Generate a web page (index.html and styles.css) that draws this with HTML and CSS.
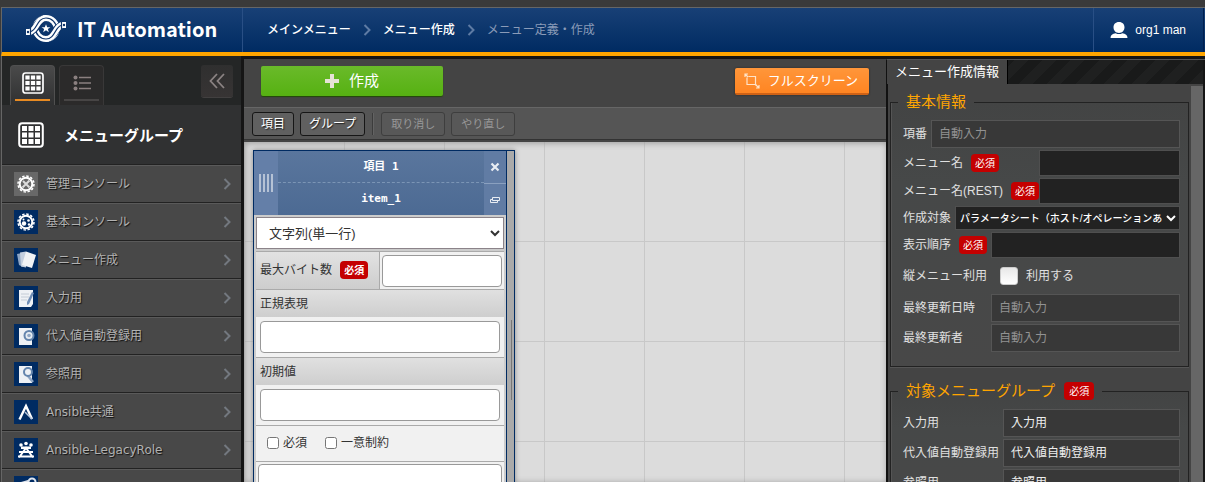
FILE: index.html
```html
<!DOCTYPE html>
<html lang="ja">
<head>
<meta charset="utf-8">
<title>IT Automation</title>
<link rel="stylesheet" href="styles.css">
</head>
<body>
<div class="app">
  <header class="header">
    <a class="brand" href="#">
      <svg class="brand-mark" viewBox="0 0 42 29" fill="none">
        <circle cx="21" cy="14.500" r="10.500" stroke="#fff" stroke-width="6"/>
        <circle cx="21" cy="14.500" r="10.500" stroke="#0d3267" stroke-width="1.200"/>
        <g stroke="#0d3267" stroke-width="8">
          <path d="M6 17C12 15 13 7 19 4.500"/>
          <path d="M36 12C30 14 29 22 23 24.500"/>
        </g>
        <g stroke="#fff" stroke-width="6">
          <path d="M1 18H5C12 16 12 4 21 4"/>
          <path d="M41 11H37C30 13 30 25 21 25"/>
        </g>
        <g stroke="#0d3267" stroke-width="1.200">
          <path d="M6 17.500C12 16 12 4 21 4"/>
          <path d="M36 11.500C30 13 30 25 21 25"/>
          <path d="M5.500 14v7M36.500 8v7"/>
        </g>
        <g fill="#0d3267"><circle cx="3" cy="18" r="1.200"/><circle cx="39" cy="11" r="1.200"/></g>
        <path fill="#fff" d="M21 10.300l1.200 2.900h3.200l-2.500 1.900.9 3.100-2.800-1.900-2.800 1.900.9-3.100-2.500-1.900h3.200z"/>
      </svg>
      <span>IT Automation</span>
    </a>
    <nav class="crumbs">
      <a href="#">メインメニュー</a>
      <svg class="chev" viewBox="0 0 8 12"><path d="M1.500 1l5 5-5 5"/></svg>
      <a href="#">メニュー作成</a>
      <svg class="chev" viewBox="0 0 8 12"><path d="M1.500 1l5 5-5 5"/></svg>
      <span>メニュー定義・作成</span>
    </nav>
    <button class="user" type="button">
      <svg viewBox="0 0 18 18"><path fill="#fff" d="M9 1c3.600 0 5.500 2.300 5.500 5.300S12.500 12 9 12 3.500 9.300 3.500 6.300 5.400 1 9 1zM.5 17c0-3 2-4.200 5.200-4.800 2 1.200 4.600 1.200 6.600 0 3.200.6 5.200 1.800 5.200 4.800z"/></svg>
      org1 man
    </button>
  </header>

  <div class="body">
    <aside class="side">
      <div class="side-tabs">
        <button class="side-tab active" type="button" aria-label="メニューグループ"><svg class="ico-grid" viewBox="0 0 26 26"><use href="#grid"/></svg></button>
        <button class="side-tab" type="button" aria-label="リスト"><svg class="ico-list" viewBox="0 0 18 16"><g fill="#8b8080"><circle cx="2.500" cy="2.500" r="2"/><circle cx="2.500" cy="8" r="2"/><circle cx="2.500" cy="13.500" r="2"/></g><path stroke="#8b8080" stroke-width="1.500" d="M6 2.500h12M6 8h12M6 13.500h12"/></svg></button>
        <button class="side-fold" type="button" aria-label="閉じる"><svg viewBox="0 0 16 16" fill="none" stroke="#8b8383" stroke-width="1.800"><path d="M8 1L1.500 8 8 15M15 1L8.500 8l6.500 7"/></svg></button>
      </div>
      <h2 class="side-title"><svg viewBox="0 0 26 26"><g id="grid"><rect x="1.200" y="1.200" width="23.600" height="23.600" rx="3" fill="none" stroke="#fff" stroke-width="2"/><path fill="#fff" d="M4 4h5v5H4zM10.500 4h5v5h-5zM17 4h5v5h-5zM4 10.500h5v5H4zM10.500 10.500h5v5h-5zM17 10.500h5v5h-5zM4 17h5v5H4zM10.500 17h5v5h-5zM17 17h5v5h-5z"/></g></svg>メニューグループ</h2>
      <ul class="side-list">
        <li><a href="#"><svg class="tile gray" viewBox="0 0 24 24"><circle cx="12" cy="12" r="8" class="teeth"/><circle cx="12" cy="12" r="6.300" class="ring"/><path class="ln2" d="M9 9l6.500 6.500M15.500 8.500l-7 7"/></svg><span>管理コンソール</span><svg class="chev" viewBox="0 0 8 12"><path d="M1.500 1l5 5-5 5"/></svg></a></li>
        <li><a href="#"><svg class="tile" viewBox="0 0 24 24"><circle cx="12" cy="12" r="8" class="teeth"/><circle cx="12" cy="12" r="6.300" class="ring"/><g fill="#fff"><circle cx="10" cy="13.500" r="2.200"/><circle cx="14.500" cy="10.500" r="1.300"/><circle cx="15" cy="14.500" r="1.200"/><circle cx="9.500" cy="9.500" r="1"/></g></svg><span>基本コンソール</span><svg class="chev" viewBox="0 0 8 12"><path d="M1.500 1l5 5-5 5"/></svg></a></li>
        <li><a href="#"><svg class="tile" viewBox="0 0 24 24"><path fill="#8fa6c4" d="M3 6l5-1 1 14-4-2z"/><path fill="#c5d0df" d="M6 4.500l6-1v16l-5-1z"/><path fill="#f1f3f5" d="M12 3.500l10 3.500-4 13-10-3z"/></svg><span>メニュー作成</span><svg class="chev" viewBox="0 0 8 12"><path d="M1.500 1l5 5-5 5"/></svg></a></li>
        <li><a href="#"><svg class="tile" viewBox="0 0 24 24"><path class="book" d="M5 4h14v14l-2 3H5z"/><path class="rule" d="M7 8h8M7 11h8M7 14h6"/><path fill="#6f8db5" d="M20 7l-5 11-2 1 0-3 5-10z"/></svg><span>入力用</span><svg class="chev" viewBox="0 0 8 12"><path d="M1.500 1l5 5-5 5"/></svg></a></li>
        <li><a href="#"><svg class="tile" viewBox="0 0 24 24"><path class="book" d="M5 4h13v17H5z"/><circle cx="15" cy="11.500" r="4.500" fill="#e6ecf2" stroke="#6485ad" stroke-width="2"/><circle cx="15" cy="11.500" r="1.800" fill="#8fa6c4"/></svg><span>代入値自動登録用</span><svg class="chev" viewBox="0 0 8 12"><path d="M1.500 1l5 5-5 5"/></svg></a></li>
        <li><a href="#"><svg class="tile" viewBox="0 0 24 24"><path class="book" d="M5 4h13v17H5z"/><path stroke="#8fa6c4" stroke-width="2.500" d="M14 14l5 6"/><circle cx="14" cy="10" r="4" fill="#eef1f5" stroke="#6485ad" stroke-width="2"/></svg><span>参照用</span><svg class="chev" viewBox="0 0 8 12"><path d="M1.500 1l5 5-5 5"/></svg></a></li>
        <li><a href="#"><svg class="tile" viewBox="0 0 24 24"><path fill="none" stroke="#fff" stroke-width="2.400" d="M5.500 19.500L12 6l6 13"/><path stroke="#b8c5d8" stroke-width="1.500" d="M11 12l7 7"/></svg><span>Ansible共通</span><svg class="chev" viewBox="0 0 8 12"><path d="M1.500 1l5 5-5 5"/></svg></a></li>
        <li><a href="#"><svg class="tile" viewBox="0 0 24 24"><g fill="#fff"><circle cx="7" cy="7" r="1.800"/><circle cx="12" cy="5.500" r="1.800"/><circle cx="17" cy="7" r="1.800"/><path d="M7 8.500h10V11H7z"/></g><path fill="none" stroke="#fff" stroke-width="2" d="M5 19.500L12 10l7 9.500M5 14h14M4 18.500h16"/></svg><span>Ansible-LegacyRole</span><svg class="chev" viewBox="0 0 8 12"><path d="M1.500 1l5 5-5 5"/></svg></a></li>
        <li><a href="#" aria-label="Ansible"><svg class="tile" viewBox="0 0 24 24"><circle cx="18" cy="6" r="3.500" fill="none" stroke="#dfe5ed" stroke-width="2"/><path fill="#dfe5ed" d="M7 6l7-2 2 8-10 8z"/></svg></a></li>
      </ul>
    </aside>

    <main class="main">
      <div class="actions">
        <button class="btn-create" type="button"><svg viewBox="0 0 14 14"><path fill="#e6e3d6" d="M5 0h4v5h5v4H9v5H5V9H0V5h5z"/></svg>作成</button>
        <button class="btn-full" type="button"><svg viewBox="0 0 16 16" fill="none" stroke="#ffe3c8" stroke-width="1.200"><path d="M4.500 3.500h7v9M3 4.500v7h9.500M1 4V1h3M1 1l3 3M15 12v3h-3M12 12l3 3"/></svg>フルスクリーン</button>
      </div>
      <div class="tools">
        <button type="button">項目</button>
        <button type="button">グループ</button>
        <i class="sep"></i>
        <button type="button" disabled>取り消し</button>
        <button type="button" disabled>やり直し</button>
      </div>
      <div class="canvas">
        <section class="item">
          <div class="item-main">
            <div class="item-head">
              <div class="grip"><i></i><i></i><i></i><i></i></div>
              <div class="names"><div>項目 1</div><div>item_1</div></div>
              <div class="ops">
                <button type="button" aria-label="削除"><svg viewBox="0 0 10 10"><path stroke="#e9edf3" stroke-width="2.200" d="M1.500 1.500l7 7M8.500 1.500l-7 7"/></svg></button>
                <button type="button" aria-label="複製"><svg viewBox="0 0 10 10" fill="none" stroke="#e9edf3"><path d="M2.500 2.500h7v3h-7zM2 4.500H.5v3h7V6"/></svg></button>
              </div>
            </div>
            <div class="item-body">
              <select class="type" aria-label="型"><option>文字列(単一行)</option></select>
              <div class="pair">
                <label for="maxb">最大バイト数 <b class="req">必須</b></label>
                <div class="cell"><input id="maxb" type="text"></div>
              </div>
              <div class="block"><label for="regex">正規表現</label><div class="field"><input id="regex" type="text"></div></div>
              <div class="block"><label for="init">初期値</label><div class="field"><input id="init" type="text"></div></div>
              <div class="checks">
                <label><input type="checkbox">必須</label>
                <label><input type="checkbox">一意制約</label>
              </div>
              <div class="note"><textarea aria-label="説明"></textarea></div>
            </div>
          </div>
          <div class="resize"></div>
        </section>
      </div>
    </main>

    <aside class="panel">
      <div class="panel-tabs"><button type="button">メニュー作成情報</button></div>
      <div class="panel-body">
        <form class="panel-form">
          <fieldset>
            <legend>基本情報</legend>
            <div class="row"><span class="lab">項番</span><span class="auto">自動入力</span></div>
            <div class="row l132"><label class="lab" for="mname">メニュー名 <b class="req">必須</b></label><input id="mname" type="text"></div>
            <div class="row l132"><label class="lab" for="mrest">メニュー名(REST) <b class="req">必須</b></label><input id="mrest" type="text"></div>
            <div class="row"><label class="lab" for="target">作成対象</label><select id="target"><option>パラメータシート（ホスト/オペレーションあり）</option></select></div>
            <div class="row l84"><label class="lab" for="order">表示順序 <b class="req">必須</b></label><input id="order" type="text"></div>
            <div class="row tall l84"><span class="lab">縦メニュー利用</span><label class="use"><input type="checkbox">利用する</label></div>
            <div class="row l84"><span class="lab">最終更新日時</span><span class="auto">自動入力</span></div>
            <div class="row l84"><span class="lab">最終更新者</span><span class="auto">自動入力</span></div>
          </fieldset>
          <fieldset>
            <legend>対象メニューグループ <b class="req">必須</b></legend>
            <div class="row l96"><span class="lab">入力用</span><span class="auto set">入力用</span></div>
            <div class="row l96"><span class="lab">代入値自動登録用</span><span class="auto set">代入値自動登録用</span></div>
            <div class="row l96"><span class="lab">参照用</span><span class="auto set">参照用</span></div>
          </fieldset>
        </form>
        <div class="bar"></div>
      </div>
    </aside>
  </div>
</div>
</body>
</html>
```

FILE: styles.css
```css
* { box-sizing: border-box; }
body {
  margin: 0;
  background: #3a3a3a;
  color: #fff;
  font: 12px/18px "Liberation Sans", "Noto Sans CJK JP", sans-serif;
  overflow: hidden;
}
button, input, select, textarea { font: inherit; color: inherit; margin: 0; padding: 0; border: 0; }
button { background: none; }
a { color: inherit; text-decoration: none; }

.app { display: flex; flex-direction: column; height: 100vh; padding-top: 7px; border-left: 1px solid #3a3a3a; }
.header {
  display: flex;
  flex: none;
  height: 49px;
  border-top: 1px solid #666;
  border-left: 1px solid #666;
  border-bottom: 4px solid #ffa500;
  background: linear-gradient(#184076, #002b62);
}
.brand {
  display: flex;
  align-items: center;
  gap: 10px;
  width: 241px;
  padding: 0 0 3px 23px;
  border-right: 1px solid #294f85;
  font: bold 20px/30px "Noto Sans CJK JP", sans-serif;
  white-space: nowrap;
}
.brand-mark { flex: none; width: 42px; height: 29px; }
.crumbs { display: flex; flex: 1; align-items: center; gap: 12px; padding-left: 24px; font-weight: 500; }
.crumbs span { color: #8a9bb8; font-weight: 400; }
.chev { flex: none; width: 8px; height: 12px; fill: none; stroke: #73787f; stroke-width: 2; }
.crumbs .chev { stroke: #5e7ba4; }
.user {
  display: flex;
  align-items: center;
  gap: 7px;
  margin-right: 1px;
  padding: 0 17px 0 16px;
  border-left: 1px solid #294f85;
  border-right: 1px solid #002050;
}
.user svg { width: 18px; height: 18px; }

.body { display: flex; flex: 1; min-height: 0; background: #151515; border-left: 1px solid #666; }

.side { flex: none; width: 239px; background: #484848; overflow: hidden; }
.side-tabs { display: flex; align-items: flex-start; gap: 4px; height: 49px; padding: 9px 8px 0; background: #242626; }
.side-tab {
  display: grid;
  place-items: center;
  position: relative;
  width: 45px;
  height: 40px;
  padding-bottom: 5px;
  border: 1px solid #393838;
  border-bottom: 0;
  border-radius: 4px 4px 0 0;
  background: #2b2a2a;
}
.side-tab::after { content: ""; position: absolute; left: 4px; right: 4px; bottom: 4px; height: 2px; background: #474545; }
.side-tab.active { background: linear-gradient(#4a4a4a, #2f3031); border-color: #505050; }
.side-tab.active::after { background: #e88b22; }
.ico-grid { width: 22px; height: 22px; }
.ico-list { width: 18px; height: 16px; }
.side-fold { display: grid; place-items: center; width: 32px; height: 32px; margin-left: auto; border-radius: 3px; background: linear-gradient(#2f2f2f, #373434); box-shadow: 0 1px #424040; }
.side-fold svg { width: 16px; height: 16px; }
.side-title {
  display: flex;
  align-items: center;
  gap: 20px;
  height: 59px;
  margin: 0;
  padding-left: 16px;
  background: #303132;
  font: bold 15px/22px "Noto Sans CJK JP", sans-serif;
}
.side-title svg { width: 26px; height: 26px; }
.side-list { margin: 0; padding: 0; list-style: none; font-family: "DejaVu Sans", "Noto Sans CJK JP", sans-serif; }
.side-list a {
  display: flex;
  align-items: center;
  gap: 8px;
  height: 38px;
  padding: 1px 10px 0 12px;
  border-top: 1px solid #222;
  box-shadow: inset 0 1px #5a5a5a;
  color: #b2b2b2;
  text-shadow: 1px 1px 1px #111;
  white-space: nowrap;
}
.side-list span { flex: 1; }
.tile { flex: none; width: 24px; height: 24px; background: #002b62; }
.tile.gray { background: #686868; }
.teeth { fill: none; stroke: #fff; stroke-width: 1.500; stroke-dasharray: 2.500 1.690; }
.ring { fill: none; stroke: #fff; stroke-width: 2; }
.ln2 { stroke: #ddd; stroke-width: 2; }
.book { fill: #eef1f5; }
.rule { stroke: #c4ccd6; }

.main { display: flex; flex: 1; flex-direction: column; min-width: 0; margin: 3px 0 0 3px; background: #444; }
.actions { display: flex; flex: none; justify-content: space-between; align-items: flex-start; height: 48px; padding: 7px 17px 0; }
.btn-create, .btn-full { display: flex; align-items: center; justify-content: center; border-radius: 2px; }
.btn-create { gap: 10px; width: 182px; height: 30px; background: linear-gradient(#6aba2a, #56b112); box-shadow: 0 1px 1px #234a08; font-size: 15px; }
.btn-create svg { width: 14px; height: 14px; }
.btn-full { gap: 8px; height: 27px; margin-top: 2px; padding: 0 11px 0 9px; border-bottom: 2px solid #cf6216; background: linear-gradient(#ff963a, #ff8522); box-shadow: 0 0 2px #222; font-size: 13px; }
.btn-full svg { width: 16px; height: 16px; }
.tools {
  display: flex;
  flex: none;
  align-items: center;
  gap: 6px;
  height: 33px;
  padding: 0 8px;
  border-top: 1px solid #666;
  border-bottom: 1px solid #333;
  background: #555;
}
.tools button { height: 24px; padding: 0 8px; border: 1px solid #161616; border-radius: 3px; background: #606060; text-shadow: 1px 1px 1px #222; }
.tools button:disabled { padding: 0 9px; border-color: #3e3e3e; background: #585858; color: #989898; font-size: 11px; text-shadow: none; }
.sep { width: 2px; height: 22px; margin: 0 1px; border-left: 1px solid #3c3c3c; border-right: 1px solid #636363; }
.canvas {
  flex: 1;
  min-height: 0;
  overflow: hidden;
  margin-top: 2px;
  padding: 8px 9px;
  background:
    linear-gradient(90deg, #c8c8c8 1px, transparent 1px) 0 0 / 100px 100px,
    linear-gradient(#c8c8c8 1px, transparent 1px) 0 -1px / 100px 100px,
    #dcdcdc;
  box-shadow: inset 1px 1px 6px #999;
}

.item { display: flex; width: 262px; border: 1px solid #002b62; box-shadow: 0 0 5px #8a8a8a; background: #ccc; color: #333; }
.item-main { flex: 1; }
.resize { width: 8px; border-left: 1px solid #002b62; background: linear-gradient(#777, #777) 4px 169px / 1px 80px no-repeat #aaa; }
.item-head { display: flex; height: 64px; background: linear-gradient(#5a769d, #4c6a93); color: #fff; }
.grip { display: flex; align-items: center; justify-content: center; gap: 2px; width: 24px; background: #647fa8; }
.grip i { width: 2px; height: 18px; background: #b5c2d5; }
.names { flex: 1; text-align: center; font: bold 11px/31px "DejaVu Sans Mono", "Noto Sans CJK JP", monospace; }
.names div + div { border-top: 1px dashed #7b95b5; }
.ops { display: grid; grid-template-rows: 1fr 1fr; width: 22px; background: #617ca4; }
.ops button { display: grid; place-items: center; }
.ops button + button { border-top: 1px solid #8aa0bf; }
.ops svg { width: 10px; height: 10px; }
.item-body { padding: 2px; background: #ccc; }
.type { display: block; width: 100%; height: 32px; padding-left: 8px; border: 1px solid #8b8389; background: #fff; font-size: 13px; }
.item-body input[type="text"], .note textarea { display: block; width: 100%; height: 32px; border: 1px solid #999; border-radius: 4px; background: #fff; }
.pair { display: flex; height: 38px; margin-top: 2px; border-top: 1px solid #aaa; }
.pair label { width: 124px; padding: 9px 4px; border-right: 1px solid #aaa; background: linear-gradient(#e2e2e2, #cdcdcd); }
.cell { flex: 1; padding: 3px 2px; background: #f1f1f1; }
.block { border-top: 1px solid #aaa; background: #f1f1f1; }
.block label { display: block; height: 27px; padding: 5px 4px; background: linear-gradient(#e0e0e0, #cecece); }
.field { padding: 4px; }
.checks { display: flex; gap: 18px; align-items: center; height: 36px; padding: 0 11px 1px; border-top: 1px solid #aaa; background: #f1f1f1; }
.checks label { display: flex; align-items: center; gap: 4px; }
.checks input { width: 12px; height: 12px; }
.note { padding: 2px; border-top: 1px solid #aaa; background: #f1f1f1; }
.note textarea { height: 60px; resize: none; }
.req {
  display: inline-block;
  margin-left: 5px;
  padding: 0 4px;
  border-radius: 4px;
  background: #c40000;
  color: #fff;
  font: 10px/18px "Noto Sans CJK JP", sans-serif;
  vertical-align: top;
}
.pair .req { font-weight: bold; }

.panel { display: flex; flex: none; flex-direction: column; width: 319px; margin-top: 3px; padding-right: 2px; border-left: 1px solid #111; border-top: 1px solid #555; background: #151515; }
.panel-tabs { flex: none; height: 24px; background: repeating-linear-gradient(135deg, #191a1a 0 10px, #1f2020 10px 20px); }
.panel-tabs button { height: 100%; padding: 0 8px; border-right: 1px solid #000; background: #444; font-size: 13px; }
.panel-body { display: flex; flex: 1; min-height: 0; overflow: hidden; background: #444; border-left: 1px solid #111; }
.panel-form { flex: 1; min-width: 0; padding: 8px 2px; }
.bar { flex: none; width: 12px; margin-top: 2px; background: #666; }
fieldset { min-width: 0; margin: 0 0 14px; padding: 8px 8px 14px 12px; border: 1px solid #222; box-shadow: inset 1px 0 #555, 0 1px #555; background: linear-gradient(#434444, #464848 30%, #484848); }
legend { height: 20px; margin-left: -5px; padding: 0 8px; color: #ffa500; font-size: 15px; line-height: 20px; }
legend .req { margin: 1px 0 0 5px; padding: 0 5px; }
.row { display: flex; gap: 4px; margin-bottom: 2px; color: #e0e0e0; }
.row:last-child { margin-bottom: 0; }
.lab { display: flex; align-items: center; flex: none; white-space: nowrap; }
.l132 .lab { width: 132px; }
.l84 .lab { width: 84px; }
.l96 .lab { width: 96px; }
.lab .req { margin-left: 8px; }
.auto { flex: 1; padding: 4px 7px; border: 1px solid #555; background: #383838; color: #929292; }
.auto.set { color: #eee; }
.row > input { flex: 1; min-width: 0; height: 26px; padding: 0 7px; border: 1px solid #4f4f4f; background: #222; }
.row select { flex: 1; min-width: 0; height: 24px; border: 1px solid #4f4f4f; background: #222; color: #fff; font-size: 10px; font-weight: 500; }
.tall { height: 32px; align-items: center; }
.use { display: flex; align-items: center; gap: 8px; padding-left: 9px; }
.use input { appearance: none; width: 18px; height: 18px; border: 1px solid #ccc; border-radius: 3px; background: linear-gradient(#e8e8e8, #fff); }
```
